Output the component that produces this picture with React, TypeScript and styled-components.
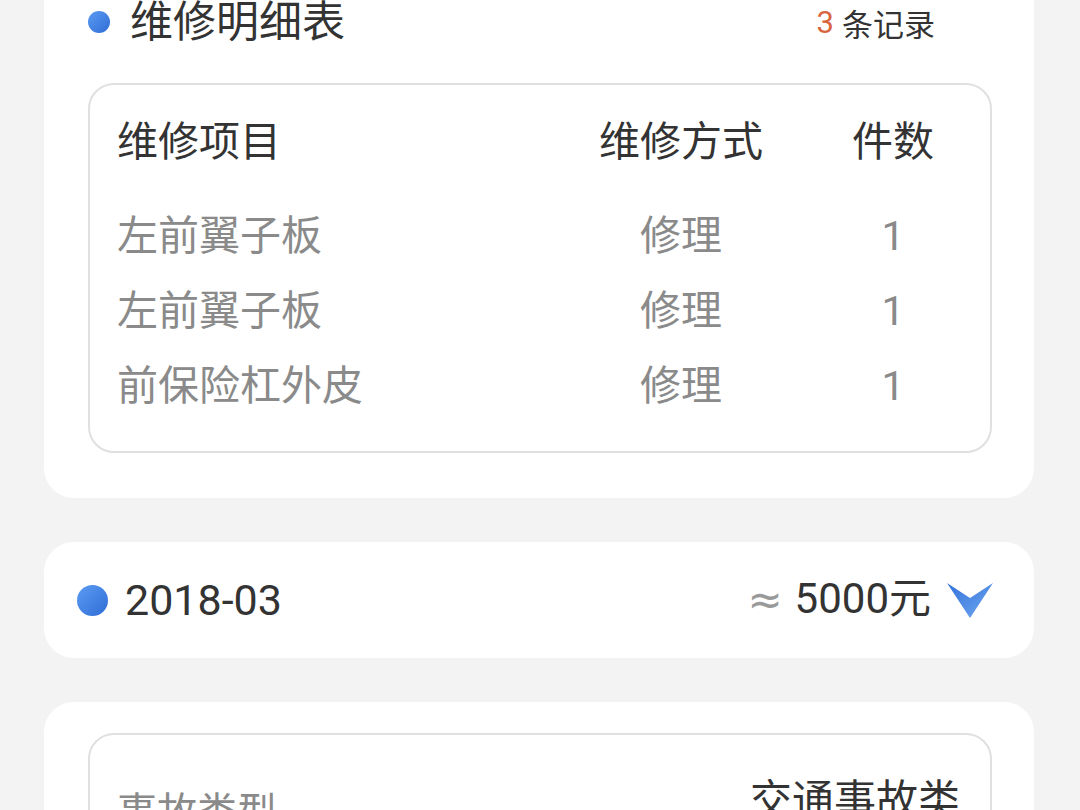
import React from "react";
import styled, { createGlobalStyle } from "styled-components";

const Global = createGlobalStyle`
  html, body { margin: 0; padding: 0; background: #f3f3f3; }
  body { font-family: Roboto, "Noto Sans CJK SC", sans-serif; overflow: hidden; }
`;

const Page = styled.div`
  width: 1080px;
  height: 810px;
  overflow: hidden;
  box-sizing: border-box;
  padding: 0 46px 0 44px;
  display: flex;
  flex-direction: column;
  gap: 44px;
`;

const Card = styled.section<{ $top?: number; $pt?: number }>`
  background: #fff;
  border-radius: 30px;
  margin-top: ${(p) => p.$top ?? 0}px;
  padding: ${(p) => p.$pt ?? 22}px 42px 45px 44px;
  flex-shrink: 0;
`;

const CardHeader = styled.div`
  display: flex;
  align-items: center;
  height: 52px;
  padding-right: 57px;
  margin-bottom: 35px;
`;

const Dot = styled.span<{ $size: number }>`
  width: ${(p) => p.$size}px;
  height: ${(p) => p.$size}px;
  border-radius: 50%;
  background: linear-gradient(135deg, #5c9cf2 0%, #2f6cd6 100%);
  flex-shrink: 0;
`;

const Title = styled.h2`
  margin: 0 0 0 20px;
  font-size: 43px;
  font-weight: 400;
  color: #333;
  line-height: 52px;
  flex: 1;
`;

const Count = styled.div`
  font-size: 31px;
  color: #333;
  display: flex;
  align-items: center;
  gap: 8px;
`;

const CountNum = styled.span`
  color: #d9653f;
`;

const Box = styled.div<{ $pad: string }>`
  border: 2px solid #e0e0e0;
  border-radius: 26px;
  padding: ${(p) => p.$pad};
`;

const Row = styled.div<{ $head?: boolean }>`
  display: grid;
  grid-template-columns: 1fr 284px 140px;
  align-items: center;
  height: ${(p) => (p.$head ? 60 : 75)}px;
  line-height: 56px;
  margin-bottom: ${(p) => (p.$head ? 26 : 0)}px;
  font-size: 41px;
  color: ${(p) => (p.$head ? "#333" : "#8a8a8a")};
`;

const Cell = styled.div<{ $center?: boolean; $shift?: number }>`
  text-align: ${(p) => (p.$center ? "center" : "left")};
  margin-left: ${(p) => p.$shift ?? 0}px;
  white-space: nowrap;
`;

const MonthCard = styled.section`
  background: #fff;
  border-radius: 30px;
  height: 116px;
  box-sizing: border-box;
  padding: 0 41px 0 33px;
  display: flex;
  align-items: center;
  flex-shrink: 0;
  line-height: 50px;
`;

const Month = styled.span`
  margin-left: 17px;
  font-size: 43px;
  color: #333;
  flex: 1;
`;

const Approx = styled.span`
  font-family: "DejaVu Sans", sans-serif;
  font-size: 42px;
  color: #9a9a9a;
  margin-right: 12px;
`;

const Amount = styled.span`
  font-size: 42px;
  color: #333;
  margin-right: 16px;
  margin-top: -3px;
`;

const InfoRow = styled.div`
  display: flex;
  justify-content: space-between;
  align-items: flex-start;
`;

const InfoLabel = styled.span`
  font-size: 40px;
  color: #8a8a8a;
  margin-top: 12px;
  line-height: 56px;
`;

const InfoValue = styled.span`
  font-size: 42px;
  color: #333;
  line-height: 56px;
  text-align: right;
`;

const ArrowIcon = () => (
  <svg width="46" height="35" viewBox="0 0 46 35">
    <defs>
      <linearGradient id="ag" x1="0" y1="0" x2="1" y2="1">
        <stop offset="0" stopColor="#3572d8" />
        <stop offset="1" stopColor="#6ea8f2" />
      </linearGradient>
    </defs>
    <path d="M0 0 L23 15 L46 0 L23 35 Z" fill="url(#ag)" />
  </svg>
);

const rows = [
  { item: "左前翼子板", way: "修理", n: 1 },
  { item: "左前翼子板", way: "修理", n: 1 },
  { item: "前保险杠外皮", way: "修理", n: 1 },
];

export default function App() {
  return (
    <>
      <Global />
      <Page>
        <Card $top={-26}>
          <CardHeader>
            <Dot $size={22} />
            <Title>维修明细表</Title>
            <Count>
              <CountNum>3</CountNum>
              <span>条记录</span>
            </Count>
          </CardHeader>
          <Box $pad="27px 30px 28px 27px">
            <Row $head>
              <Cell>维修项目</Cell>
              <Cell $center $shift={6}>维修方式</Cell>
              <Cell $center $shift={6}>件数</Cell>
            </Row>
            {rows.map((r, i) => (
              <Row key={i}>
                <Cell>{r.item}</Cell>
                <Cell $center $shift={6}>{r.way}</Cell>
                <Cell $center $shift={6}>{r.n}</Cell>
              </Row>
            ))}
          </Box>
        </Card>
        <MonthCard>
          <Dot $size={31} />
          <Month>2018-03</Month>
          <Approx>≈</Approx>
          <Amount>5000元</Amount>
          <ArrowIcon />
        </MonthCard>
        <Card $pt={31}>
          <Box $pad="38px 30px 36px 27px">
            <InfoRow>
              <InfoLabel>事故类型</InfoLabel>
              <InfoValue>交通事故类</InfoValue>
            </InfoRow>
          </Box>
        </Card>
      </Page>
    </>
  );
}
